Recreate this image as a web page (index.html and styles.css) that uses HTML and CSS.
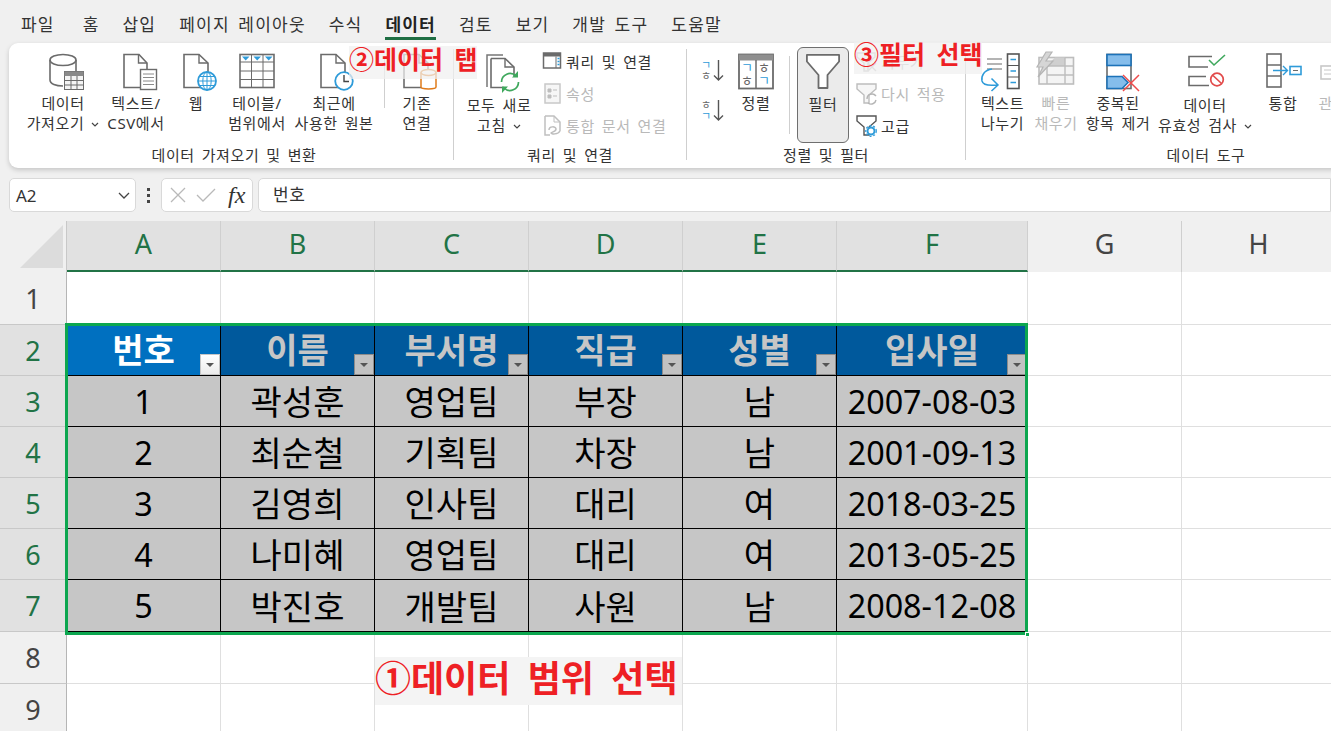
FILE: index.html
```html
<!DOCTYPE html>
<html lang="ko">
<head>
<meta charset="utf-8">
<title>Excel 필터</title>
<link rel="stylesheet" href="styles.css">
</head>
<body>
<div class="app">
  <nav class="menu">
    <span class="tab first">파일</span><span class="tab">홈</span><span class="tab">삽입</span><span class="tab">페이지 레이아웃</span><span class="tab">수식</span><span class="tab active">데이터</span><span class="tab">검토</span><span class="tab">보기</span><span class="tab">개발 도구</span><span class="tab">도움말</span>
  </nav>

  <section class="ribbon">
    <div class="group g1">
      <div class="body">
        <div class="big w-import">
          <svg class="ico" viewBox="20 52 86 40"><g fill="none" stroke="#6b6b6b" stroke-width="1.6"><ellipse cx="63" cy="60" rx="13" ry="5.5" fill="#fff"/><path d="M50 60V80C50 84 56 86 63 86M76 60V71"/></g><rect x="64.5" y="71.5" width="19" height="18" fill="#f4f4f4" stroke="#6b6b6b"/><rect x="64.5" y="71.5" width="19" height="4.5" fill="#8a8a8a"/><path d="M71 76V89M77 76V89M65 80.5H83M65 85H83" stroke="#6b6b6b" fill="none"/></svg>
          <span class="t">데이터</span><span class="t">가져오기 <svg class="chev" viewBox="0 0 8 5"><path d="M1 1L4 4L7 1" fill="none" stroke="#444" stroke-width="1.2"/></svg></span>
        </div>
        <div class="big w-text">
          <svg class="ico" viewBox="106 52 60 40"><path d="M124 54.5H139L147 63V87.5H124Z" fill="#fff" stroke="#6b6b6b" stroke-width="1.6"/><path d="M138.500 54.500V63H147" fill="none" stroke="#6b6b6b" stroke-width="1.4"/><rect x="140.500" y="69.500" width="16" height="20" fill="#fff" stroke="#6b6b6b" stroke-width="1.4"/><path d="M143 74H154M143 77.500H154M143 81H154M143 84.500H154" stroke="#8a8a8a"/></svg>
          <span class="t">텍스트/</span><span class="t">CSV에서</span>
        </div>
        <div class="big w-web">
          <svg class="ico" viewBox="166 52 60 40"><path d="M184 54.500H199L208 63V87.500H184Z" fill="#fff" stroke="#6b6b6b" stroke-width="1.600"/><path d="M199 54.500V63H208" fill="none" stroke="#6b6b6b" stroke-width="1.400"/><circle cx="207" cy="81" r="9" fill="#fff" stroke="#2e9bd9" stroke-width="1.800"/><path d="M198 81H216M199.500 76.500H214.500M199.500 85.500H214.500M207 72V90" stroke="#2e9bd9"/><ellipse cx="207" cy="81" rx="4.200" ry="9" fill="none" stroke="#2e9bd9"/></svg>
          <span class="t">웹</span>
        </div>
        <div class="big w-table">
          <svg class="ico" viewBox="226 52 62 40"><rect x="240" y="54.500" width="34" height="33" fill="#fff" stroke="#6b6b6b" stroke-width="1.600"/><path d="M240 62H274M240 71H274M240 79.500H274M251.500 54.500V87.500M263 54.500V87.500" stroke="#6b6b6b" fill="none"/><path d="M242 56.500H249.500L245.700 60.500ZM253.500 56.500H261L257.200 60.500ZM265 56.500H272.500L268.700 60.500Z" fill="#2e9bd9"/></svg>
          <span class="t">테이블/</span><span class="t">범위에서</span>
        </div>
        <div class="big w-recent">
          <svg class="ico" viewBox="288 52 92 40"><path d="M321 54.500H336L345 63V87.500H321Z" fill="#fff" stroke="#6b6b6b" stroke-width="1.600"/><path d="M336 54.500V63H345" fill="none" stroke="#6b6b6b" stroke-width="1.400"/><circle cx="344" cy="81" r="8.800" fill="#fff" stroke="#2e9bd9" stroke-width="1.800"/><path d="M344 75V81.500H349" fill="none" stroke="#444" stroke-width="1.400"/></svg>
          <span class="t">최근에</span><span class="t">사용한 원본</span>
        </div>
        <div class="vsep vs-short"></div>
        <div class="big w-exist">
          <svg class="ico" viewBox="390 52 56 40"><path d="M405 54.500H420L429 63V87.500H405Z" fill="#fff" stroke="#6b6b6b" stroke-width="1.600"/><path d="M420 54.500V63H429" fill="none" stroke="#6b6b6b" stroke-width="1.400"/><path d="M422 72.500V87C422 89.500 437 89.500 437 87V72.500" fill="#fff" stroke="#e07b1a" stroke-width="1.500"/><ellipse cx="429.500" cy="72.500" rx="7.500" ry="3" fill="#fff" stroke="#e07b1a" stroke-width="1.500"/></svg>
          <span class="t">기존</span><span class="t">연결</span>
        </div>
      </div>
      <div class="glabel">데이터 가져오기 및 변환</div>
    </div>
    <div class="vsep"></div>

    <div class="group g2">
      <div class="body">
        <div class="big w-refresh">
          <svg class="ico tall" viewBox="463 52 70 42"><path d="M486 87V55H502" fill="none" stroke="#777" stroke-width="1.500"/><path d="M490 58.500H504L513 67V76M503 87.500H490V58.500" fill="#fff" stroke="#6b6b6b" stroke-width="1.600"/><path d="M504 58.500V67H513" fill="none" stroke="#6b6b6b" stroke-width="1.400"/><g fill="none" stroke="#3fa85d" stroke-width="1.700"><path d="M500.500 82A8.500 8.500 0 0 1 515 76M517.500 82A8.500 8.500 0 0 1 503 88"/></g><path d="M517 71V77.500H511ZM501 93V86.500H507Z" fill="#3fa85d"/></svg>
          <span class="t">모두 새로</span><span class="t">고침 <svg class="chev" viewBox="0 0 8 5"><path d="M1 1L4 4L7 1" fill="none" stroke="#444" stroke-width="1.200"/></svg></span>
        </div>
        <div class="smalls s2">
          <div class="small"><svg class="sico" viewBox="0 0 22 24"><rect x="2.500" y="4" width="17" height="15" fill="#fff" stroke="#6b6b6b" stroke-width="1.500"/><rect x="2.500" y="4" width="17" height="3.500" fill="#6b6b6b"/><path d="M15 7.500V19" stroke="#6b6b6b"/><path d="M16.500 9.500H18.500M16.500 12.500H18.500M16.500 15.500H18.500" stroke="#2e9bd9" stroke-width="1.500"/></svg><span>쿼리 및 연결</span></div>
          <div class="small off"><svg class="sico" viewBox="0 0 22 24"><rect x="4" y="3" width="15" height="19" fill="#f6f6f6" stroke="#c8c8c8" stroke-width="1.500"/><path d="M7 8H10V11H7ZM7 14H10V17H7ZM12 9H16M12 15H16" fill="#bdbdbd" stroke="#bdbdbd"/></svg><span>속성</span></div>
          <div class="small off"><svg class="sico" viewBox="0 0 22 24"><path d="M4 3H13L19 9V18M4 3V22H9" fill="none" stroke="#c0c0c0" stroke-width="1.500"/><path d="M13 3V9H19" fill="none" stroke="#c0c0c0"/><path d="M8 17C8 13 15 13 15 16S10 19 10 20S17 22 19 18" fill="none" stroke="#bdbdbd" stroke-width="1.500"/></svg><span>통합 문서 연결</span></div>
        </div>
      </div>
      <div class="glabel">쿼리 및 연결</div>
    </div>
    <div class="vsep"></div>

    <div class="group g3">
      <div class="body">
        <div class="sorts">
          <svg class="sort" viewBox="0 0 30 30"><text x="1" y="11" class="k b">ㄱ</text><text x="1" y="21.500" class="k g">ㅎ</text><path d="M18.500 2V22M14 17.500L18.500 22L23 17.500" fill="none" stroke="#555" stroke-width="1.400"/></svg>
          <svg class="sort" viewBox="0 0 30 30"><text x="1" y="11" class="k g">ㅎ</text><text x="1" y="21.500" class="k b">ㄱ</text><path d="M18.500 2V22M14 17.500L18.500 22L23 17.500" fill="none" stroke="#555" stroke-width="1.400"/></svg>
        </div>
        <div class="big w-sort">
          <svg class="ico" viewBox="730 52 50 40"><rect x="738" y="54.500" width="34" height="34" fill="#fff" stroke="#6b6b6b" stroke-width="1.800"/><rect x="738" y="54.500" width="34" height="6" fill="#8f8f8f"/><path d="M755 60V88.500" stroke="#6b6b6b" stroke-width="1.500"/><text x="740" y="72" class="k kl b">ㄱ</text><text x="740" y="85" class="k kl g">ㅎ</text><text x="757" y="72" class="k kl g">ㅎ</text><text x="757" y="85" class="k kl b">ㄱ</text></svg>
          <span class="t">정렬</span>
        </div>
        <div class="vsep vs-mid"></div>
        <div class="filter">
          <svg class="funnel" viewBox="0 0 34 35"><path d="M.9 .9H33.100V7.500L21.500 21V34H12.500V21L.9 7.500Z" fill="#fff" stroke="#6b6b6b" stroke-width="1.800" stroke-linejoin="round"/></svg>
          <span class="t">필터</span>
        </div>
        <div class="smalls s3">
          <div class="small off"><svg class="sico" viewBox="0 0 22 24"><path d="M1 4H19V8L12 14V22H8V14L1 8Z" fill="#f6f6f6" stroke="#bdbdbd" stroke-width="1.400"/><path d="M12 14L20 22M20 14L12 22" stroke="#bdbdbd" stroke-width="1.400"/></svg><span>지우기</span></div>
          <div class="small off"><svg class="sico" viewBox="0 0 22 24"><path d="M1 3H20V8L13 14V22H8V14L1 8Z" fill="#f6f6f6" stroke="#bdbdbd" stroke-width="1.400"/><path d="M11 18A5 5 0 0 1 20 15M20 19A5 5 0 0 1 12 22" fill="none" stroke="#b5b5b5" stroke-width="1.400"/></svg><span>다시 적용</span></div>
          <div class="small"><svg class="sico" viewBox="0 0 22 24"><path d="M1 3H20V8L13 14V22H8V14L1 8Z" fill="#fff" stroke="#555" stroke-width="1.400"/><circle cx="15" cy="18" r="3.500" fill="#fff" stroke="#2e9bd9" stroke-width="2"/><circle cx="15" cy="18" r="5.300" fill="none" stroke="#2e9bd9" stroke-width="1.200" stroke-dasharray="2 1.800"/></svg><span>고급</span></div>
        </div>
      </div>
      <div class="glabel">정렬 및 필터</div>
    </div>
    <div class="vsep"></div>

    <div class="group g4">
      <div class="body">
        <div class="big w-split">
          <svg class="ico" viewBox="975 52 55 40"><path d="M987 59H1002M987 64H1002M987 69H1002" stroke="#6b6b6b" stroke-width="1.200"/><rect x="1007.500" y="54" width="11.500" height="34.500" fill="#fff" stroke="#555" stroke-width="1.600"/><path d="M1007 65.500H1019M1007 77H1019" stroke="#555"/><path d="M1010.500 59.500H1016M1010.500 71H1016M1010.500 82.500H1016" stroke="#2e9bd9" stroke-width="1.500"/><path d="M992 69C984 70 981 76 982 81C983 85 988 86 997 85M991.500 78.500L998 85L991.500 91" fill="none" stroke="#2e9bd9" stroke-width="1.500"/></svg>
          <span class="t">텍스트</span><span class="t">나누기</span>
        </div>
        <div class="big w-flash off">
          <svg class="ico" viewBox="1030 52 52 40"><rect x="1039" y="57.500" width="34.500" height="26.500" fill="#f4f4f4" stroke="#bdbdbd" stroke-width="1.600"/><path d="M1055 57.500H1065V66H1046Z" fill="#cfcfcf"/><path d="M1047 66H1073M1047 75H1073M1047 66V84M1065 57.500V84" stroke="#bdbdbd" stroke-width="1.400" fill="none"/><path d="M1046 52L1037 67H1043L1038 77L1053 61H1046L1052 52Z" fill="#d6d6d6" stroke="#b5b5b5" stroke-width="1.200"/></svg>
          <span class="t">빠른</span><span class="t">채우기</span>
        </div>
        <div class="big w-dedupe">
          <svg class="ico" viewBox="1082 52 72 40"><rect x="1107" y="54.500" width="24" height="34" fill="#fff" stroke="#6b6b6b" stroke-width="1.600"/><rect x="1107" y="54.500" width="24" height="11" fill="#85bdeb" stroke="#1c72b8" stroke-width="1.600"/><path d="M1107 76.500H1122L1128 82.500L1122 88.500H1107Z" fill="#85bdeb" stroke="#1c72b8" stroke-width="1.500"/><path d="M1123 75L1139 91M1139 75L1123 91" stroke="#ee4b4b" stroke-width="1.500"/></svg>
          <span class="t">중복된</span><span class="t">항목 제거</span>
        </div>
        <div class="big w-valid">
          <svg class="ico tall" viewBox="1154 52 102 42"><path d="M1212 56.500H1189V67H1208M1206 76.500H1189V85.500H1209" fill="#fff" stroke="#6b6b6b" stroke-width="1.600"/><path d="M1209 60L1214 65L1225 55" fill="none" stroke="#3fa85d" stroke-width="1.600"/><circle cx="1217" cy="79.500" r="6.300" fill="#fff" stroke="#e24a4a" stroke-width="1.700"/><path d="M1213 75.500L1221.500 83.500" stroke="#e24a4a" stroke-width="1.700"/></svg>
          <span class="t">데이터</span><span class="t">유효성 검사 <svg class="chev" viewBox="0 0 8 5"><path d="M1 1L4 4L7 1" fill="none" stroke="#444" stroke-width="1.200"/></svg></span>
        </div>
        <div class="big w-merge">
          <svg class="ico" viewBox="1256 52 54 40"><rect x="1267" y="54" width="14" height="33" fill="#fff" stroke="#6b6b6b" stroke-width="1.600"/><path d="M1267 65H1281M1267 76H1281" stroke="#6b6b6b" stroke-width="1.400"/><path d="M1273 70.500H1287M1283 66L1287.500 70.500L1283 75" fill="none" stroke="#2e9bd9" stroke-width="1.400"/><rect x="1290" y="66.500" width="11" height="8" fill="#fff" stroke="#2e9bd9" stroke-width="1.600"/><path d="M1293 70.500H1298" stroke="#6b6b6b"/></svg>
          <span class="t">통합</span>
        </div>
        <div class="big w-rel off">
          <svg class="ico" viewBox="1310 52 46 40"><rect x="1321" y="66" width="20" height="13" fill="#fff" stroke="#c8c8c8" stroke-width="1.600"/><path d="M1324 70H1338M1324 74H1338" stroke="#c8c8c8"/></svg>
          <span class="t">관계</span>
        </div>
      </div>
      <div class="glabel">데이터 도구</div>
    </div>
  </section>

  <section class="formula">
    <div class="namebox"><span>A2</span><svg class="fchev" viewBox="0 0 12 7"><path d="M1 1L6 6L11 1" fill="none" stroke="#444" stroke-width="1.300"/></svg></div>
    <div class="dots"><i></i><i></i><i></i></div>
    <div class="fbtns">
      <svg class="fb" viewBox="0 0 18 18"><path d="M2 2L16 16M16 2L2 16" stroke="#b9b9b9" stroke-width="1.300"/></svg>
      <svg class="fb wide" viewBox="0 0 20 18"><path d="M1 9L7 15L19 3" fill="none" stroke="#b9b9b9" stroke-width="1.300"/></svg>
      <span class="fx">fx</span>
    </div>
    <div class="finput">번호</div>
  </section>

  <section class="sheet">
    <div class="corner"><svg class="tri" viewBox="0 0 43 43"><path d="M43 0V43H0Z" fill="#dcdcdc"/></svg></div>
    <div class="ch sel">A</div><div class="ch sel">B</div><div class="ch sel">C</div><div class="ch sel">D</div><div class="ch sel">E</div><div class="ch sel">F</div><div class="ch">G</div><div class="ch">H</div>

    <div class="rh">1</div>
    <div class="c"></div><div class="c"></div><div class="c"></div><div class="c"></div><div class="c"></div><div class="c"></div><div class="c"></div><div class="c"></div>

    <div class="rh sel">2</div>
    <div class="c th first">번호<span class="dd"></span></div><div class="c th">이름<span class="dd"></span></div><div class="c th">부서명<span class="dd"></span></div><div class="c th">직급<span class="dd"></span></div><div class="c th">성별<span class="dd"></span></div><div class="c th">입사일<span class="dd"></span></div><div class="c"></div><div class="c"></div>

    <div class="rh sel">3</div>
    <div class="c td num">1</div><div class="c td">곽성훈</div><div class="c td">영업팀</div><div class="c td">부장</div><div class="c td">남</div><div class="c td num">2007-08-03</div><div class="c"></div><div class="c"></div>

    <div class="rh sel">4</div>
    <div class="c td num">2</div><div class="c td">최순철</div><div class="c td">기획팀</div><div class="c td">차장</div><div class="c td">남</div><div class="c td num">2001-09-13</div><div class="c"></div><div class="c"></div>

    <div class="rh sel">5</div>
    <div class="c td num">3</div><div class="c td">김영희</div><div class="c td">인사팀</div><div class="c td">대리</div><div class="c td">여</div><div class="c td num">2018-03-25</div><div class="c"></div><div class="c"></div>

    <div class="rh sel">6</div>
    <div class="c td num">4</div><div class="c td">나미혜</div><div class="c td">영업팀</div><div class="c td">대리</div><div class="c td">여</div><div class="c td num">2013-05-25</div><div class="c"></div><div class="c"></div>

    <div class="rh sel">7</div>
    <div class="c td num">5</div><div class="c td">박진호</div><div class="c td">개발팀</div><div class="c td">사원</div><div class="c td">남</div><div class="c td num">2008-12-08</div><div class="c"></div><div class="c"></div>

    <div class="rh">8</div>
    <div class="c"></div><div class="c"></div><div class="c"></div><div class="c"></div><div class="c"></div><div class="c"></div><div class="c"></div><div class="c"></div>

    <div class="rh">9</div>
    <div class="c"></div><div class="c"></div><div class="c"></div><div class="c"></div><div class="c"></div><div class="c"></div><div class="c"></div><div class="c"></div>

    <div class="selection"></div>
    <div class="handle"></div>
  </section>

  <div class="note n1">①데이터 범위 선택</div>
  <div class="note n2">②데이터 탭</div>
  <div class="note n3">③필터 선택</div>
</div>
</body>
</html>
```

FILE: styles.css
```css
* { box-sizing: border-box; }
html, body { margin: 0; padding: 0; }
body { width: 1331px; height: 731px; overflow: hidden; background: #f0f0f0; color: #2b2b2b;
  font-family: "Noto Sans", "Noto Sans CJK KR", sans-serif; }
.app { position: relative; width: 1331px; height: 731px; overflow: hidden; }

/* menu */
.menu { height: 43px; display: flex; padding-left: 21px; gap: 23px; }
.tab { height: 40px; padding-top: 11px; font-size: 17px; line-height: 28px; letter-spacing: 1.200px; word-spacing: 3px; white-space: pre; color: #333; }
.tab.first { margin-right: 5px; }
.tab.active { font-weight: 700; color: #222; border-bottom: 3px solid #1e6e43; }

/* ribbon */
.ribbon { margin-left: 9px; width: 1500px; height: 125px; background: #fff; border-radius: 9px 0 0 9px;
  box-shadow: 0 2px 5px rgba(0,0,0,.18); display: flex; font-size: 15px; letter-spacing: .6px; word-spacing: 2.500px; }
.group { flex: none; display: flex; flex-direction: column; height: 125px; }
.g1 { width: 444px; padding-left: 11px; }
.g2 { width: 232px; padding-left: 10px; }
.g3 { width: 278px; padding-left: 13px; }
.g4 { width: 480px; padding-left: 9px; }
.body { height: 101px; display: flex; }
.glabel { height: 20px; line-height: 20px; text-align: center; color: #333; margin-top: 1px; }
.group.g1 .glabel { margin-left: -11px; margin-right: -6px; }
.group.g2 .glabel { margin-left: -10px; }
.group.g3 .glabel { margin-left: -13px; }
.group.g4 .glabel { margin-left: -9px; }
.vsep { flex: none; width: 1px; height: 111px; margin-top: 6px; background: #cfcfcf; }
.vs-short { height: 52px; margin: 13px 4px 0 4px; }
.vs-mid { height: 78px; margin: 13px 7px 0 8px; }

.big { flex: none; display: flex; flex-direction: column; align-items: center; padding-top: 9px; }
.t { height: 20px; line-height: 20px; white-space: pre; color: #333; display: block; }
.ico { display: block; flex: none; width: 100%; height: 40px; margin-bottom: 1px; overflow: visible; }
.ico.tall { height: 42px; margin-bottom: 1px; }
.off, .big.off .t { color: #b9b9b9; }
.chev { width: 8px; height: 5px; vertical-align: 2px; }

.w-import { width: 86px; }
.w-text { width: 60px; }
.w-web { width: 60px; }
.w-table { width: 62px; }
.w-recent { width: 92px; }
.w-exist { width: 56px; }
.w-refresh { width: 70px; }
.w-sort { width: 50px; }
.w-split { width: 55px; }
.w-flash { width: 52px; }
.w-dedupe { width: 72px; }
.w-valid { width: 102px; }
.w-merge { width: 54px; }
.w-rel { width: 46px; }

.smalls { display: flex; flex-direction: column; padding-top: 2px; }
.s2 { margin-left: 7px; }
.s3 { margin-left: 7px; }
.small { height: 32px; display: flex; align-items: center; gap: 3px; white-space: pre; color: #333; }
.small.off { color: #b9b9b9; }
.sico { width: 22px; height: 24px; flex: none; overflow: visible; }

.sorts { width: 31px; padding-top: 15px; display: flex; flex-direction: column; gap: 10px; }
.sort { width: 30px; height: 30px; display: block; }
.k { font-family: "Noto Sans CJK KR", sans-serif; font-size: 11px; letter-spacing: 0; }
.kl { font-size: 13px; }
.k.b { fill: #2e9bd9; }
.k.g { fill: #666; }

.filter { flex: none; width: 52px; height: 96px; margin-top: 4px; background: #ebebeb; border: 1px solid #6f6f6f; border-radius: 6px;
  display: flex; flex-direction: column; align-items: center; padding-top: 6px; }
.funnel { width: 34px; height: 35px; display: block; flex: none; margin-bottom: 5px; }

/* formula bar */
.formula { margin-top: 10px; height: 34px; display: flex; padding-left: 9px; align-items: stretch; }
.namebox { width: 127px; background: #fff; border: 1px solid #d9d9d9; border-radius: 5px; display: flex; align-items: center;
  justify-content: space-between; padding: 0 5px 0 6px; font-size: 17px; color: #333; }
.fchev { width: 12px; height: 7px; }
.dots { width: 25px; display: flex; flex-direction: column; align-items: center; justify-content: center; gap: 3px; }
.dots i { display: block; width: 3px; height: 3px; background: #444; }
.fbtns { width: 92px; background: #fff; border: 1px solid #d9d9d9; border-radius: 5px; display: flex; align-items: center; padding-left: 7px; gap: 9px; }
.fb { width: 18px; height: 18px; flex: none; }
.fb.wide { width: 20px; }
.fx { font-family: "Liberation Serif", serif; font-style: italic; font-weight: 400; font-size: 24px; line-height: 24px; color: #333; margin-left: 3px; }
.finput { flex: 1; margin-left: 5px; background: #fff; border: 1px solid #d9d9d9; border-radius: 5px 0 0 5px; padding-left: 14px; font-size: 17px; line-height: 31px; letter-spacing: .6px; color: #333; }

/* sheet */
.sheet { position: relative; margin-top: 9px; display: grid;
  grid-template-columns: 67px 154px 154px 154px 154px 154px 191px 154px 154px;
  grid-template-rows: 51px 53px 51px 51px 51px 51px 51px 52px 52px 52px; }
.corner { background: #f0f0f0; position: relative; border-right: 1px solid #c8c8c8; }
.tri { position: absolute; left: 20px; top: 4px; width: 43px; height: 43px; }
.ch { background: #f0f0f0; border-right: 1px solid #cfcfcf; font-size: 27px; line-height: 46px; text-align: center; color: #444; padding-bottom: 2px; }
.ch.sel { background: #e1e1e1; color: #217346; border-bottom: 2px solid #217346; }
.rh { background: #f0f0f0; border-right: 1px solid #b5b5b5; border-bottom: 1px solid #c8c8c8; font-size: 27px; text-align: center; color: #444; display: flex; align-items: center; justify-content: center; }
.rh.sel { background: #e1e1e1; color: #217346; }
.c { background: #fff; border-right: 1px solid #dfdfdf; border-bottom: 1px solid #dfdfdf; position: relative; display: flex; align-items: center; justify-content: center; }
.th { background: #00599c; color: #c6c6c6; font-weight: 700; font-size: 34px; border-color: #000; padding-bottom: 3px; }
.th.first { background: #0070c0; color: #fff; }
.td { background: #c6c6c6; color: #000; font-size: 34px; border-color: #000; padding-bottom: 1px; }
.td.num { font-size: 32.300px; }
.dd { position: absolute; right: 0; bottom: 0; width: 20px; height: 21px; background: #c2c2c2; border: 1px solid #8c8c8c; }
.dd::after { content: ""; position: absolute; left: 5px; top: 8px; border-left: 4px solid transparent; border-right: 4px solid transparent; border-top: 4px solid #555; }
.th.first .dd { background: linear-gradient(#fff, #ececec); border-color: #c6c6c6; }
.selection { position: absolute; left: 65px; top: 102px; width: 963px; height: 312px; border: 3px solid #0ca64f; }
.handle { position: absolute; left: 1025px; top: 411px; width: 5px; height: 5px; background: #0ca64f; border: 1px solid #fff; }

/* annotations */
.note { position: absolute; color: #ee2024; font-weight: 700; white-space: pre; background: rgba(240,240,240,.72); }
.n1 { left: 375px; top: 657px; width: 307px; height: 48px; font-size: 36px; line-height: 44px; word-spacing: 8px; background: #f4f4f4; }
.n2 { left: 349px; top: 46px; width: 128px; height: 33px; font-size: 25px; line-height: 27px; word-spacing: 5px; }
.n3 { left: 854px; top: 42px; width: 128px; height: 32px; font-size: 25px; line-height: 25px; word-spacing: 5px; }
```
